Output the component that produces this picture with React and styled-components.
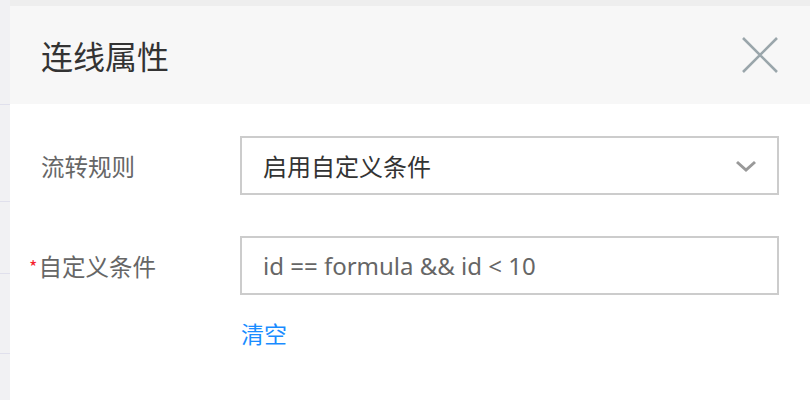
import React from 'react';
import styled, { createGlobalStyle } from 'styled-components';

const GlobalStyle = createGlobalStyle`
  html, body { margin: 0; padding: 0; background: #efefef; }
  body { font-family: "Noto Sans", "Noto Sans CJK SC", sans-serif; }
`;

const Screen = styled.div`
  display: flex;
  width: 810px; height: 400px;
  overflow: hidden;
`;

// table rows peeking out behind the dialog mask
const SideStrip = styled.div`
  width: 10px; flex: none;
  display: flex; flex-direction: column;
  background: #f1f1f3;
`;

const SideRow = styled.div`
  height: ${(p) => p.h}px; flex: none;
  border-bottom: 1px solid #e0e0ec;
`;

const Main = styled.div`
  flex: 1;
  display: flex; flex-direction: column;
  padding-top: 6px;
  background: #eeeeee;
`;

const Dialog = styled.div`
  flex: 1;
  display: flex; flex-direction: column;
  background: #fff;
`;

const Header = styled.div`
  height: 98px; flex: none;
  display: flex; align-items: center; justify-content: space-between;
  padding: 0 32px 0 31px;
  background: #f7f7f7;
`;

const Title = styled.h2`
  margin: 0;
  font-size: 32px; font-weight: 400;
  color: #333;
  font-family: "Noto Sans CJK SC", sans-serif;
`;

const CloseButton = styled.button`
  width: 36px; height: 36px; padding: 0;
  display: flex; align-items: center; justify-content: center;
  border: none; background: transparent; cursor: pointer;
`;

const Body = styled.div`
  display: flex; flex-direction: column;
  padding: 32px 31px 0 31px;
`;

const FormRow = styled.div`
  display: flex; align-items: center;
  margin-bottom: ${(p) => p.gap || 0}px;
`;

const Label = styled.label`
  width: 199px; flex: none;
  font-size: 23.5px; color: #666;
  font-family: "Noto Sans CJK SC", sans-serif;
`;

const Required = styled.span`
  margin-left: -12px; margin-right: 1px;
  color: #f5222d; font-size: 18px;
  vertical-align: 2px;
`;

const Field = styled.div`
  flex: 1;
  height: 59px; box-sizing: border-box;
  display: flex; align-items: center; justify-content: space-between;
  padding: 0 20px 0 21px;
  border: 2px solid #cccccc;
  font-size: 24px;
  color: ${(p) => (p.muted ? '#666' : '#333')};
  font-family: "Noto Sans", "Noto Sans CJK SC", sans-serif;
`;

const Extra = styled.div`
  padding-left: 200px;
  margin-top: 21px;
`;

const Link = styled.a`
  font-size: 23px; color: #1a8cff;
  font-family: "Noto Sans CJK SC", sans-serif;
  cursor: pointer;
`;

const CloseIcon = () => (
  <svg width="36" height="36" viewBox="0 0 36 36">
    <path d="M1 1 L35 35 M35 1 L1 35" stroke="#9aa6ab" strokeWidth="2.6" fill="none" />
  </svg>
);

const Chevron = () => (
  <svg width="22" height="14" viewBox="0 0 22 14">
    <path d="M2 3 L11 11 L20 3" stroke="#999" strokeWidth="3" fill="none" strokeLinejoin="miter" />
  </svg>
);

export default function App() {
  return (
    <>
      <GlobalStyle />
      <Screen>
        <SideStrip>
          <SideRow h={104} />
          <SideRow h={96} />
          <SideRow h={71} />
          <SideRow h={79} />
        </SideStrip>
        <Main>
          <Dialog>
            <Header>
              <Title>连线属性</Title>
              <CloseButton><CloseIcon /></CloseButton>
            </Header>
            <Body>
              <FormRow gap={41}>
                <Label>流转规则</Label>
                <Field>
                  <span>启用自定义条件</span>
                  <Chevron />
                </Field>
              </FormRow>
              <FormRow>
                <Label><Required>*</Required>自定义条件</Label>
                <Field muted>id == formula &amp;&amp; id &lt; 10</Field>
              </FormRow>
              <Extra>
                <Link>清空</Link>
              </Extra>
            </Body>
          </Dialog>
        </Main>
      </Screen>
    </>
  );
}
